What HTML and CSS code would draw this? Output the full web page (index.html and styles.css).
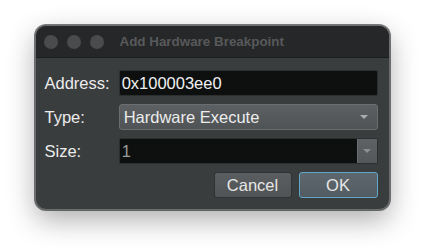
FILE: index.html
```html
<!DOCTYPE html>
<html lang="en">
<head>
    <meta charset="UTF-8">
    <title>Add Hardware Breakpoint</title>
    <link rel="stylesheet" href="styles.css">
</head>
<body>
    <div class="window">
        <div class="titlebar">
            <span class="light"></span>
            <span class="light"></span>
            <span class="light"></span>
            <span class="title">Add Hardware Breakpoint</span>
        </div>
        <div class="content">
            <div class="form">
                <label>Address:</label>
                <div class="field">0x100003ee0</div>
                <label>Type:</label>
                <div class="combo">
                    <span>Hardware Execute</span>
                    <span class="arrow"></span>
                </div>
                <label>Size:</label>
                <div class="field spin">
                    <span class="spin-text">1</span>
                    <span class="spin-btn"><span class="arrow"></span></span>
                </div>
            </div>
            <div class="buttons">
                <button class="btn">Cancel</button>
                <button class="btn default">OK</button>
            </div>
        </div>
    </div>
</body>
</html>
```

FILE: styles.css
```css
body {
    margin: 0;
    width: 424px;
    height: 252px;
    background-color: #ffffff;
    font-family: "Liberation Sans", Arial, sans-serif;
    display: flex;
    justify-content: center;
    align-items: flex-start;
    padding-top: 25px;
    box-sizing: border-box;
}
.window {
    width: 355px;
    height: 185px;
    border-radius: 11px;
    background-color: #3a3d3e;
    border: 1px solid #6b6e70;
    box-sizing: border-box;
    overflow: hidden;
    box-shadow: 0 10px 28px rgba(0, 0, 0, 0.32), 0 0 0 1px rgba(0, 0, 0, 0.5);
}
.titlebar {
    height: 32px;
    background-color: #262728;
    border-bottom: 1px solid #1c1d1e;
    box-sizing: border-box;
    display: flex;
    align-items: center;
    padding-left: 8px;
    gap: 9px;
}
.light {
    width: 14px;
    height: 14px;
    border-radius: 50%;
    background-color: #4a4b4d;
}
.title {
    margin-left: 7px;
    font-size: 13.4px;
    font-weight: bold;
    color: #58595b;
}
.content {
    padding: 12px 11px 12px 9px;
}
.form {
    display: grid;
    grid-template-columns: auto 1fr;
    column-gap: 9px;
    row-gap: 8px;
    align-items: center;
}
label {
    color: #ececec;
    font-size: 16.5px;
}
.field {
    height: 26px;
    background-color: #0e1010;
    border: 1px solid #2c2f30;
    border-radius: 2px;
    box-sizing: border-box;
    color: #f0f0f0;
    font-size: 16.5px;
    padding-left: 2px;
    display: flex;
    align-items: center;
}
.combo {
    height: 26px;
    background: linear-gradient(#5c6062, #4f5355);
    border: 1px solid #6a6e70;
    border-radius: 3px;
    box-sizing: border-box;
    color: #ececec;
    font-size: 16.5px;
    padding: 0 9px 0 4px;
    display: flex;
    align-items: center;
    justify-content: space-between;
}
.arrow {
    width: 0;
    height: 0;
    border-left: 4px solid transparent;
    border-right: 4px solid transparent;
    border-top: 4px solid #a9acad;
}
.spin {
    padding-left: 2px;
    padding-right: 0;
    justify-content: space-between;
}
.spin-text {
    color: #9a9c9d;
}
.spin-btn {
    width: 19px;
    height: 24px;
    background: linear-gradient(#5e6264, #53575a);
    border-left: 1px solid #6a6e70;
    display: flex;
    align-items: center;
    justify-content: center;
}
.spin-btn .arrow {
    border-top-color: #8d9092;
}
.buttons {
    display: flex;
    justify-content: flex-end;
    gap: 7px;
    margin-top: 8px;
}
.btn {
    height: 26px;
    width: 78px;
    background: linear-gradient(#5a5e60, #505456);
    border: 1px solid #2f3233;
    border-radius: 3px;
    color: #e6e6e6;
    font-family: "Liberation Sans", Arial, sans-serif;
    font-size: 16.5px;
    padding: 0;
}
.btn.default {
    width: 79px;
    background: linear-gradient(#5d676d, #525b61);
    border: 1px solid #5fa8c8;
}
```
